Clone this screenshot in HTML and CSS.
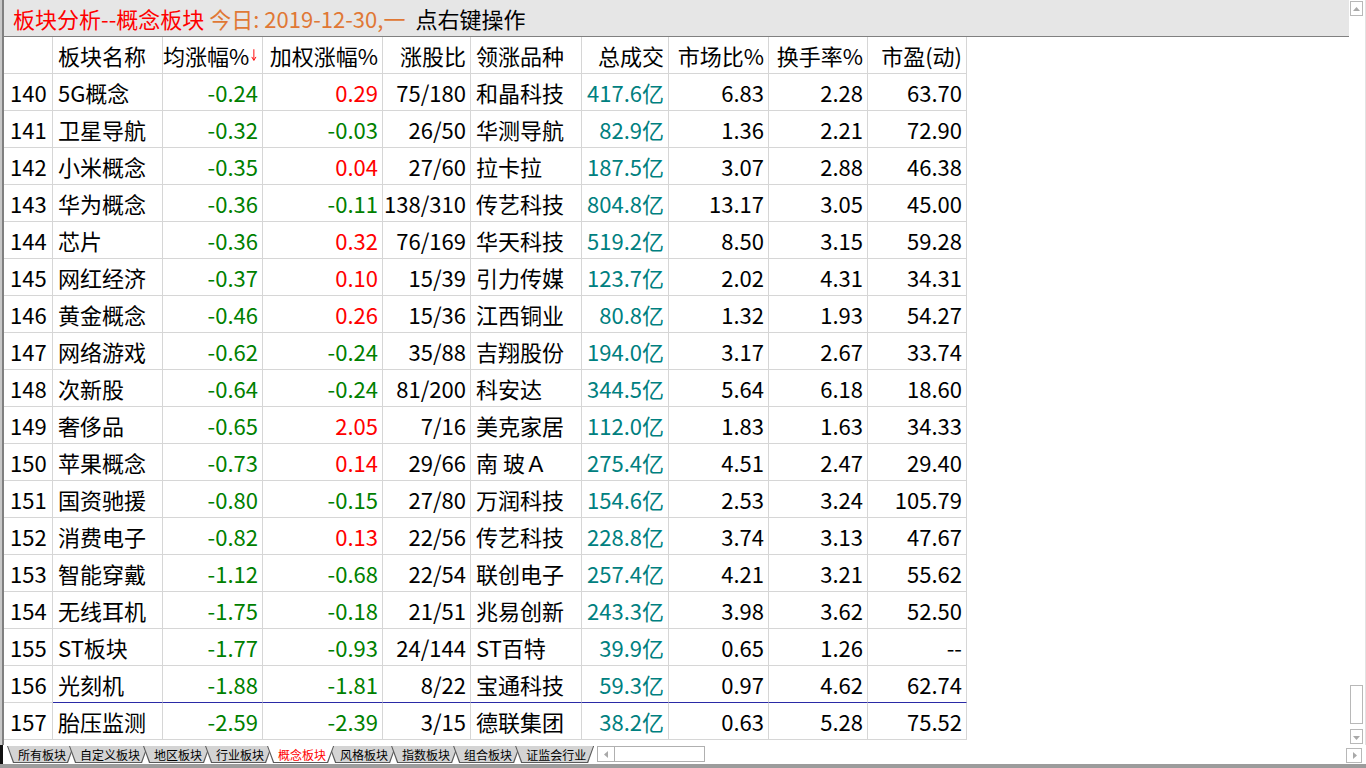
FILE: index.html
```html
<!DOCTYPE html>
<html lang="zh-CN">
<head>
<meta charset="utf-8">
<title>板块分析--概念板块</title>
<link rel="stylesheet" href="styles.css">
</head>
<body>
<div class="window">
  <div class="content">
    <div class="pane">
      <div class="titlebar">
        <span class="red">板块分析--概念板块</span>
        <span class="org">今日: 2019-12-30,一</span>
        <span class="blk">点右键操作</span>
      </div>
      <div class="table">
        <div class="row head">
          <div class="c n"></div>
          <div class="c l">板块名称</div>
          <div class="c"><span>均涨幅%</span><svg class="sort" width="6" height="14" viewBox="0 0 6 14"><path d="M3 1v11.5M0.8 9l2.2 3.6L5.2 9" stroke="#f00" stroke-width="1" fill="none"/></svg></div>
          <div class="c">加权涨幅%</div>
          <div class="c">涨股比</div>
          <div class="c l">领涨品种</div>
          <div class="c">总成交</div>
          <div class="c">市场比%</div>
          <div class="c">换手率%</div>
          <div class="c">市盈(动)</div>
        </div>
        <div class="row"><div class="c n">140</div><div class="c l">5G概念</div><div class="c g">-0.24</div><div class="c r">0.29</div><div class="c">75/180</div><div class="c l">和晶科技</div><div class="c t">417.6亿</div><div class="c">6.83</div><div class="c">2.28</div><div class="c">63.70</div></div>
        <div class="row"><div class="c n">141</div><div class="c l">卫星导航</div><div class="c g">-0.32</div><div class="c g">-0.03</div><div class="c">26/50</div><div class="c l">华测导航</div><div class="c t">82.9亿</div><div class="c">1.36</div><div class="c">2.21</div><div class="c">72.90</div></div>
        <div class="row"><div class="c n">142</div><div class="c l">小米概念</div><div class="c g">-0.35</div><div class="c r">0.04</div><div class="c">27/60</div><div class="c l">拉卡拉</div><div class="c t">187.5亿</div><div class="c">3.07</div><div class="c">2.88</div><div class="c">46.38</div></div>
        <div class="row"><div class="c n">143</div><div class="c l">华为概念</div><div class="c g">-0.36</div><div class="c g">-0.11</div><div class="c">138/310</div><div class="c l">传艺科技</div><div class="c t">804.8亿</div><div class="c">13.17</div><div class="c">3.05</div><div class="c">45.00</div></div>
        <div class="row"><div class="c n">144</div><div class="c l">芯片</div><div class="c g">-0.36</div><div class="c r">0.32</div><div class="c">76/169</div><div class="c l">华天科技</div><div class="c t">519.2亿</div><div class="c">8.50</div><div class="c">3.15</div><div class="c">59.28</div></div>
        <div class="row"><div class="c n">145</div><div class="c l">网红经济</div><div class="c g">-0.37</div><div class="c r">0.10</div><div class="c">15/39</div><div class="c l">引力传媒</div><div class="c t">123.7亿</div><div class="c">2.02</div><div class="c">4.31</div><div class="c">34.31</div></div>
        <div class="row"><div class="c n">146</div><div class="c l">黄金概念</div><div class="c g">-0.46</div><div class="c r">0.26</div><div class="c">15/36</div><div class="c l">江西铜业</div><div class="c t">80.8亿</div><div class="c">1.32</div><div class="c">1.93</div><div class="c">54.27</div></div>
        <div class="row"><div class="c n">147</div><div class="c l">网络游戏</div><div class="c g">-0.62</div><div class="c g">-0.24</div><div class="c">35/88</div><div class="c l">吉翔股份</div><div class="c t">194.0亿</div><div class="c">3.17</div><div class="c">2.67</div><div class="c">33.74</div></div>
        <div class="row"><div class="c n">148</div><div class="c l">次新股</div><div class="c g">-0.64</div><div class="c g">-0.24</div><div class="c">81/200</div><div class="c l">科安达</div><div class="c t">344.5亿</div><div class="c">5.64</div><div class="c">6.18</div><div class="c">18.60</div></div>
        <div class="row"><div class="c n">149</div><div class="c l">奢侈品</div><div class="c g">-0.65</div><div class="c r">2.05</div><div class="c">7/16</div><div class="c l">美克家居</div><div class="c t">112.0亿</div><div class="c">1.83</div><div class="c">1.63</div><div class="c">34.33</div></div>
        <div class="row"><div class="c n">150</div><div class="c l">苹果概念</div><div class="c g">-0.73</div><div class="c r">0.14</div><div class="c">29/66</div><div class="c l">南 玻Ａ</div><div class="c t">275.4亿</div><div class="c">4.51</div><div class="c">2.47</div><div class="c">29.40</div></div>
        <div class="row"><div class="c n">151</div><div class="c l">国资驰援</div><div class="c g">-0.80</div><div class="c g">-0.15</div><div class="c">27/80</div><div class="c l">万润科技</div><div class="c t">154.6亿</div><div class="c">2.53</div><div class="c">3.24</div><div class="c">105.79</div></div>
        <div class="row"><div class="c n">152</div><div class="c l">消费电子</div><div class="c g">-0.82</div><div class="c r">0.13</div><div class="c">22/56</div><div class="c l">传艺科技</div><div class="c t">228.8亿</div><div class="c">3.74</div><div class="c">3.13</div><div class="c">47.67</div></div>
        <div class="row"><div class="c n">153</div><div class="c l">智能穿戴</div><div class="c g">-1.12</div><div class="c g">-0.68</div><div class="c">22/54</div><div class="c l">联创电子</div><div class="c t">257.4亿</div><div class="c">4.21</div><div class="c">3.21</div><div class="c">55.62</div></div>
        <div class="row"><div class="c n">154</div><div class="c l">无线耳机</div><div class="c g">-1.75</div><div class="c g">-0.18</div><div class="c">21/51</div><div class="c l">兆易创新</div><div class="c t">243.3亿</div><div class="c">3.98</div><div class="c">3.62</div><div class="c">52.50</div></div>
        <div class="row"><div class="c n">155</div><div class="c l">ST板块</div><div class="c g">-1.77</div><div class="c g">-0.93</div><div class="c">24/144</div><div class="c l">ST百特</div><div class="c t">39.9亿</div><div class="c">0.65</div><div class="c">1.26</div><div class="c">--</div></div>
        <div class="row mark"><div class="c n">156</div><div class="c l">光刻机</div><div class="c g">-1.88</div><div class="c g">-1.81</div><div class="c">8/22</div><div class="c l">宝通科技</div><div class="c t">59.3亿</div><div class="c">0.97</div><div class="c">4.62</div><div class="c">62.74</div></div>
        <div class="row"><div class="c n">157</div><div class="c l">胎压监测</div><div class="c g">-2.59</div><div class="c g">-2.39</div><div class="c">3/15</div><div class="c l">德联集团</div><div class="c t">38.2亿</div><div class="c">0.63</div><div class="c">5.28</div><div class="c">75.52</div></div>
      </div>
    </div>
  </div>
  <div class="vscroll">
    <div class="sbtn"><svg width="11" height="12" viewBox="0 0 11 12"><path d="M2 8h7L5.5 4z" fill="#a9a9a9"/></svg></div>
    <div class="spacer"></div>
    <div class="thumb"></div>
    <div class="sbtn down"><svg width="11" height="12" viewBox="0 0 11 12"><path d="M2 5h7L5.5 9z" fill="#a9a9a9"/></svg></div>
  </div>
  <div class="tabbar">
    <span class="tab">所有板块</span>
    <span class="tab">自定义板块</span>
    <span class="tab">地区板块</span>
    <span class="tab">行业板块</span>
    <span class="tab on">概念板块</span>
    <span class="tab">风格板块</span>
    <span class="tab">指数板块</span>
    <span class="tab">组合板块</span>
    <span class="tab">证监会行业</span>
    <div class="hscroll">
      <span class="hbtn"><svg width="12" height="13" viewBox="0 0 12 13"><path d="M8 3v7L4 6.5z" fill="#a9a9a9"/></svg></span>
    </div>
    <span class="rbtn"><svg width="14" height="13" viewBox="0 0 14 13"><path d="M6 3v7l4-3.5z" fill="#a9a9a9"/></svg></span>
  </div>
  <div class="bottombar"></div>
</div>
</body>
</html>
```

FILE: styles.css
```css
html, body {
  margin: 0;
  padding: 0;
}
body {
  width: 1366px;
  height: 768px;
  overflow: hidden;
  background: #ffffff;
  font-family: "Noto Sans CJK SC", "Microsoft YaHei", sans-serif;
  color: #000;
}
.window {
  display: grid;
  grid-template-columns: 1349px 17px;
  grid-template-rows: 745px 19px 4px;
  width: 1366px;
  height: 768px;
}
.content {
  border-left: 2px solid #c8c8c8;
  overflow: hidden;
}
.pane {
  border-left: 2px solid #808080;
  height: 100%;
  box-sizing: border-box;
}
.titlebar {
  height: 37px;
  box-sizing: border-box;
  background: #e6e6e6;
  border-bottom: 1px solid #808080;
  display: flex;
  align-items: center;
  padding-left: 9px;
  font-size: 22px;
  line-height: 36px;
  white-space: nowrap;
}
.titlebar .red { color: #ff0000; }
.titlebar .org { color: #e07835; margin-left: 5px; }
.titlebar .blk { color: #000; margin-left: 10px; }

.row {
  display: grid;
  grid-template-columns: 49px 110px 100px 120px 88px 111px 87px 100px 99px 99px;
  width: 963px;
}
.c {
  height: 37px;
  box-sizing: border-box;
  border-right: 1px solid #d6d6d6;
  border-bottom: 1px solid #d6d6d6;
  display: flex;
  align-items: center;
  justify-content: flex-end;
  padding-right: 4px;
  font-size: 22px;
  white-space: nowrap;
  color: #000;
}
.c.l {
  justify-content: flex-start;
  padding-left: 5px;
}
.c.n {
  justify-content: flex-start;
  padding-left: 6px;
}
.c.g { color: #008000; }
.c.r { color: #ff0000; }
.c.t { color: #008080; }
.row.mark .c + .c {
  border-bottom-color: #2a2aa6;
}
.sort {
  align-self: flex-start;
  margin-top: 11px;
  margin-left: 2px;
  margin-right: 1px;
}

.vscroll {
  grid-column: 2;
  grid-row: 1;
  display: flex;
  flex-direction: column;
  box-sizing: border-box;
  border-right: 1px solid #e2e2e2;
  padding: 1px 0 1px 1px;
}
.sbtn {
  width: 13px;
  height: 15px;
  box-sizing: border-box;
  border: 1px solid #b8b8b8;
  background: #fff;
  display: flex;
  align-items: center;
  justify-content: center;
}
.sbtn.down {
  margin-top: 5px;
}
.spacer { flex: 1; }
.thumb {
  width: 13px;
  height: 39px;
  box-sizing: border-box;
  border: 1px solid #b8b8b8;
  background: #fff;
}

.tabbar {
  grid-column: 1 / 3;
  grid-row: 2;
  display: flex;
  align-items: flex-start;
  border-left: 3px solid #111;
  padding-top: 1px;
  background: #fff;
  font-size: 12px;
  line-height: 17px;
  white-space: nowrap;
}
.tab {
  position: relative;
  z-index: 0;
  height: 17px;
  padding: 0 8px 0 11px;
  margin-left: -5px;
  color: #000;
}
.tab:first-child { margin-left: 4px; }
.tab::before,
.tab::after {
  content: "";
  position: absolute;
  z-index: -1;
  clip-path: polygon(0 0, 100% 0, calc(100% - 6px) 100%, 6px 100%);
}
.tab::before {
  left: 0; right: 0; top: 0; bottom: 0;
  background: #5a5a5a;
}
.tab::after {
  left: 1px; right: 1px; top: 0; bottom: 1px;
  background: #d4d4d4;
}
.tab.on {
  z-index: 2;
  color: #ff0000;
}
.tab.on::after { background: #ffffff; }

.hscroll {
  margin-left: 3px;
  width: 108px;
  height: 16px;
  box-sizing: border-box;
  border: 1px solid #b0b0b0;
  background: #fff;
  display: flex;
}
.hbtn {
  width: 17px;
  height: 14px;
  box-sizing: border-box;
  border-right: 1px solid #b0b0b0;
  display: flex;
  align-items: center;
  justify-content: center;
}
.rbtn {
  margin-left: auto;
  margin-right: 4px;
  margin-top: 2px;
  width: 16px;
  height: 15px;
  box-sizing: border-box;
  border: 1px solid #b8b8b8;
  background: #fff;
  display: flex;
  align-items: center;
  justify-content: center;
}
.bottombar {
  grid-column: 1 / 3;
  grid-row: 3;
  background: #9c9c9c;
}
```
